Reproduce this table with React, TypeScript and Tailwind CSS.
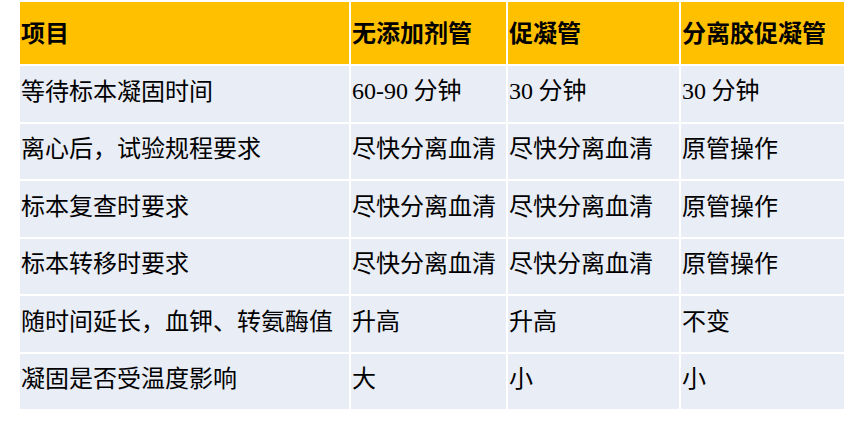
import React from "react";

const header = ["项目", "无添加剂管", "促凝管", "分离胶促凝管"];
const rows: string[][] = [
  ["等待标本凝固时间", "60-90 分钟", "30 分钟", "30 分钟"],
  ["离心后，试验规程要求", "尽快分离血清", "尽快分离血清", "原管操作"],
  ["标本复查时要求", "尽快分离血清", "尽快分离血清", "原管操作"],
  ["标本转移时要求", "尽快分离血清", "尽快分离血清", "原管操作"],
  ["随时间延长，血钾、转氨酶值", "升高", "升高", "不变"],
  ["凝固是否受温度影响", "大", "小", "小"],
];

function Cell({ text }: { text: string }) {
  const m = text.match(/^([0-9-]+)\s(.*)$/);
  if (m) {
    return (
      <span>
        <span className="font-['Liberation_Serif',serif]">{m[1]}</span>{" "}
        <span>{m[2]}</span>
      </span>
    );
  }
  return <span>{text}</span>;
}

export default function App() {
  return (
    <div className="w-[865px] h-[444px] bg-white pt-[2px] pl-[20px] font-['Noto_Sans_CJK_SC',sans-serif] text-black">
      <div className="grid grid-cols-[329px_155px_171px_163px] grid-rows-[62px_repeat(6,55.5px)] gap-[2px] w-[824px]">
        {header.map((h, i) => (
          <div
            key={"h" + i}
            className="bg-[#FFC000] flex items-center pl-[1px] pb-[2px] text-[24px] font-bold leading-none whitespace-nowrap"
          >
            {h}
          </div>
        ))}
        {rows.map((r, ri) =>
          r.map((c, ci) => (
            <div
              key={ri + "-" + ci}
              className="bg-[#E9EDF5] flex items-center pl-[1px] pb-[8px] text-[24px] leading-none whitespace-nowrap"
            >
              <Cell text={c} />
            </div>
          ))
        )}
      </div>
    </div>
  );
}
